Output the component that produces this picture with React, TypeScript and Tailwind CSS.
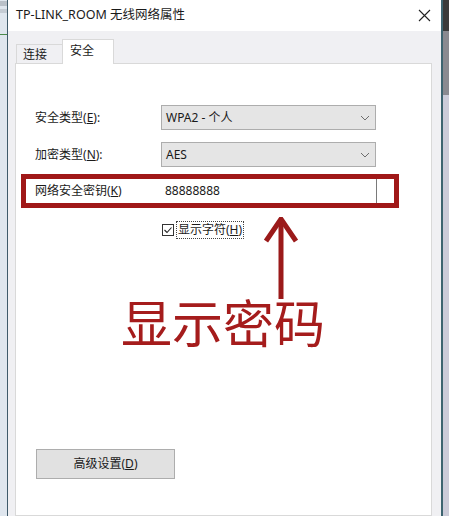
import React from 'react';

const font = { fontFamily: '"Noto Sans", "Noto Sans CJK SC", sans-serif' };

const Chevron: React.FC = () => (
  <svg width="10" height="6" viewBox="0 0 10 6" className="text-[#6d6d6d]">
    <path d="M1 1l4 4 4-4" fill="none" stroke="currentColor" strokeWidth="1" />
  </svg>
);

const SelectRow: React.FC<{ label: string; hotkey: string; value: string }> = ({ label, hotkey, value }) => (
  <div className="flex items-center h-[25px]">
    <div className="w-[145px] pl-[19px] text-[12px] text-[#1a1a1a]">
      {label}(<span className="underline">{hotkey}</span>):
    </div>
    <div className="w-[215px] h-[25px] flex items-center justify-between bg-[#e5e5e5] border border-[#adadad] pl-[4px] pr-[5px] text-[12px] text-[#1a1a1a]">
      <span>{value}</span>
      <Chevron />
    </div>
  </div>
);

export default function App() {
  return (
    <div className="flex w-[449px] h-[516px] overflow-hidden bg-[#dfe5ec]" style={font}>
      {/* desktop strip left */}
      <div className="w-[7px] flex flex-col bg-[#dfe6ee]">
        <div className="h-[5px] mt-[1px] bg-[#b9c0c8]" />
        <div className="h-[4px] mt-[3px] bg-[#c5ccd4]" />
        <div className="h-[4px] mt-[18px] border-b border-[#4a8a4a]" />
      </div>
      <div className="w-px bg-[#3f5a6a]" />

      {/* window */}
      <div className="w-[433px] flex flex-col bg-[#f0f0f3]">
        <div className="h-[31px] bg-white flex items-center justify-between pl-[8px] pr-[10px]">
          <span className="text-[12.5px] text-[#1a1a1a]">TP-LINK_ROOM 无线网络属性</span>
          <svg width="13" height="13" viewBox="0 0 13 13">
            <path d="M1 1l11 11M12 1L1 12" stroke="#222" strokeWidth="1.1" />
          </svg>
        </div>

        <div className="flex-1 flex flex-col pl-[7px] pr-[9px]">
          {/* tabs */}
          <div className="flex items-end h-[33px]">
            <div className="w-[47px] h-[20px] ml-[1px] border border-b-0 border-[#d9d9d9] bg-[#f0f0f3] flex items-center pl-[6px] text-[12px] text-[#1a1a1a]">
              连接
            </div>
            <div className="w-[52px] h-[25px] -ml-px border border-b-0 border-[#d9d9d9] bg-white flex items-center pl-[7px] pb-[2px] text-[12px] text-[#1a1a1a] relative z-10">
              安全
            </div>
          </div>

          {/* panel */}
          <div className="flex-1 bg-white border border-[#d9d9d9] -mt-px flex flex-col">
            <div className="h-[41px]" />
            <SelectRow label="安全类型" hotkey="E" value="WPA2 - 个人" />
            <div className="h-[12px]" />
            <SelectRow label="加密类型" hotkey="N" value="AES" />
            <div className="h-[7px]" />

            <div className="ml-[5px] w-[378px] h-[34px] border-[5px] border-[#a01818] flex items-stretch">
              <div className="w-[135px] pl-[9px] flex items-center text-[12px] text-[#1a1a1a]">
                网络安全密钥(<span className="underline">K</span>)
              </div>
              <div className="w-[216px] border-r border-[#7a7a7a] flex items-center pl-[4px] text-[12px] text-[#1a1a1a]">
                88888888
              </div>
            </div>

            <div className="relative">
              <div className="flex items-center mt-[12px] ml-[146px] h-[19px]">
                <svg width="12" height="12" viewBox="0 0 12 12">
                  <rect x="0.5" y="0.5" width="11" height="11" fill="white" stroke="#333" />
                  <path d="M2.5 6l2.5 2.5 4.5-5" fill="none" stroke="#222" strokeWidth="1.1" />
                </svg>
                <span className="ml-[2px] px-[1px] border border-dotted border-[#444] text-[12px] text-[#1a1a1a] leading-[16px]">
                  显示字符(<span className="underline">H</span>)
                </span>
              </div>
              {/* annotation arrow */}
              <svg className="absolute left-[248px] top-[9px]" width="34" height="82" viewBox="0 0 34 82">
                <path d="M17 4v78" stroke="#9b1a1a" strokeWidth="5" />
                <path d="M2 24L17 2l15 22" fill="none" stroke="#9b1a1a" strokeWidth="5" strokeLinejoin="miter" />
              </svg>
            </div>

            <div className="ml-[105px] mt-[53px] text-[51px] leading-[58px] text-[#a51c1c]" style={{ fontFamily: '"Noto Sans CJK SC", sans-serif' }}>
              显示密码
            </div>

            <div className="h-[99px]" />
            <div className="ml-[20px] w-[139px] h-[30px] bg-[#e1e1e1] border border-[#adadad] flex items-center justify-center text-[12px] text-[#1a1a1a]">
              高级设置(<span className="underline">D</span>)
            </div>
          </div>
        </div>
      </div>

      <div className="w-[2px] bg-[#3d6470]" />
      <div className="flex-1 flex flex-col">
        <div className="h-[31px] bg-[#3a3a3a]" />
        <div className="h-[64px] bg-[#8a8a90]" />
        <div className="flex-1 bg-[#cbcbd8]" />
      </div>
    </div>
  );
}
